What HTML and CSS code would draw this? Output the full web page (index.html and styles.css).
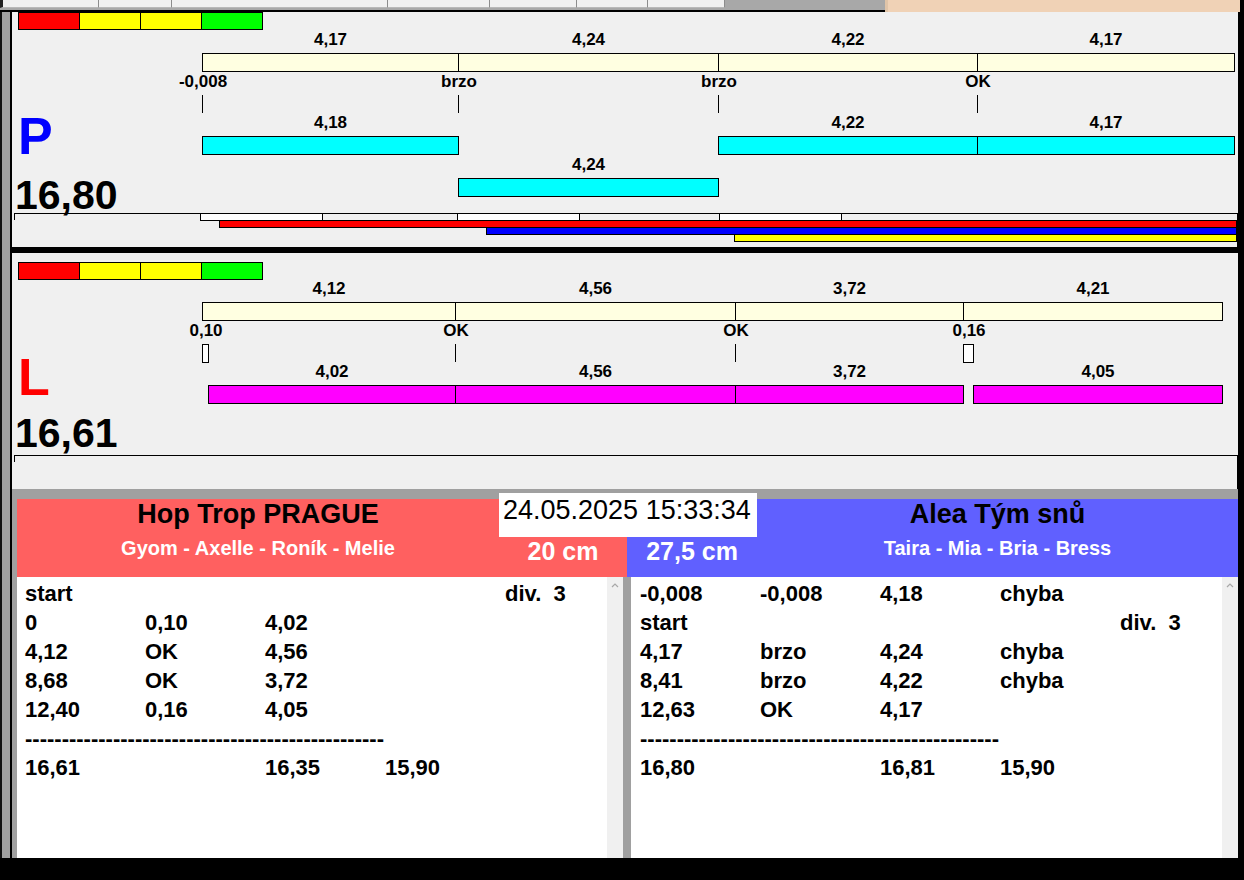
FILE: index.html
```html
<!DOCTYPE html>
<html lang="cs">
<head>
  <meta charset="UTF-8" />
  <meta name="viewport" content="width=device-width, initial-scale=1.0"/>
  <title>Štafeta – měření</title>
  <link rel="stylesheet" href="styles.css">
</head>
<body>
<div class="window">

  <div class="topbar">
    <div class="tabs">
      <div class="tab"></div><div class="tab"></div><div class="tab"></div><div class="tab"></div>
      <div class="tab"></div><div class="tab"></div><div class="tab"></div>
    </div>
    <div class="topbar-fill"></div>
  </div>

  <div class="main">
    <div class="frame-left"></div>
    <div class="content">

      <!-- lane P -->
      <section class="lane lane-p">
        <div class="lane-side">
          <div class="strip"><span class="red"></span><span class="yellow"></span><span class="yellow"></span><span class="green"></span></div>
          <div class="letter blue">P</div>
          <div class="score">16,80</div>
        </div>
        <div class="track">
          <div class="lbl r-plan-l" style="left:190px;width:257px">4,17</div>
          <div class="lbl r-plan-l" style="left:446px;width:261px">4,24</div>
          <div class="lbl r-plan-l" style="left:706px;width:260px">4,22</div>
          <div class="lbl r-plan-l" style="left:965px;width:258px">4,17</div>
          <div class="bar plan r-plan" style="left:190px;width:257px"></div>
          <div class="bar plan r-plan" style="left:446px;width:261px"></div>
          <div class="bar plan r-plan" style="left:706px;width:260px"></div>
          <div class="bar plan r-plan" style="left:965px;width:258px"></div>

          <div class="lbl at r-mark-l" style="left:191px">-0,008</div>
          <div class="lbl at r-mark-l" style="left:447px">brzo</div>
          <div class="lbl at r-mark-l" style="left:707px">brzo</div>
          <div class="lbl at r-mark-l" style="left:966px">OK</div>
          <div class="tick r-tick" style="left:190px"></div>
          <div class="tick r-tick" style="left:446px"></div>
          <div class="tick r-tick" style="left:706px"></div>
          <div class="tick r-tick" style="left:965px"></div>

          <div class="lbl r-act-l" style="left:190px;width:257px">4,18</div>
          <div class="lbl r-act-l" style="left:706px;width:260px">4,22</div>
          <div class="lbl r-act-l" style="left:965px;width:258px">4,17</div>
          <div class="bar cyan r-act" style="left:190px;width:257px"></div>
          <div class="bar cyan r-act" style="left:706px;width:260px"></div>
          <div class="bar cyan r-act" style="left:965px;width:258px"></div>

          <div class="lbl r-act2-l" style="left:446px;width:261px">4,24</div>
          <div class="bar cyan r-act2" style="left:446px;width:261px"></div>
        </div>
        <div class="lane-foot">
          <div class="slot" style="left:186px"></div>
          <div class="slot" style="left:443px"></div>
          <div class="slot" style="left:705px"></div>
          <div class="run run-red" style="left:205px"></div>
          <div class="run run-blue" style="left:472px"></div>
          <div class="run run-yellow" style="left:720px"></div>
        </div>
      </section>

      <div class="lane-sep"></div>

      <!-- lane L -->
      <section class="lane lane-l">
        <div class="lane-side">
          <div class="strip"><span class="red"></span><span class="yellow"></span><span class="yellow"></span><span class="green"></span></div>
          <div class="letter red-text">L</div>
          <div class="score">16,61</div>
        </div>
        <div class="track">
          <div class="lbl r-plan-l" style="left:190px;width:254px">4,12</div>
          <div class="lbl r-plan-l" style="left:443px;width:281px">4,56</div>
          <div class="lbl r-plan-l" style="left:723px;width:229px">3,72</div>
          <div class="lbl r-plan-l" style="left:951px;width:260px">4,21</div>
          <div class="bar plan r-plan" style="left:190px;width:254px"></div>
          <div class="bar plan r-plan" style="left:443px;width:281px"></div>
          <div class="bar plan r-plan" style="left:723px;width:229px"></div>
          <div class="bar plan r-plan" style="left:951px;width:260px"></div>

          <div class="lbl at r-mark-l" style="left:194px">0,10</div>
          <div class="lbl at r-mark-l" style="left:444px">OK</div>
          <div class="lbl at r-mark-l" style="left:724px">OK</div>
          <div class="lbl at r-mark-l" style="left:957px">0,16</div>
          <div class="mark r-tick" style="left:190px;width:7px"></div>
          <div class="tick r-tick" style="left:443px"></div>
          <div class="tick r-tick" style="left:723px"></div>
          <div class="mark r-tick" style="left:951px;width:11px"></div>

          <div class="lbl r-act-l" style="left:196px;width:248px">4,02</div>
          <div class="lbl r-act-l" style="left:443px;width:281px">4,56</div>
          <div class="lbl r-act-l" style="left:723px;width:229px">3,72</div>
          <div class="lbl r-act-l" style="left:961px;width:250px">4,05</div>
          <div class="bar magenta r-act" style="left:196px;width:248px"></div>
          <div class="bar magenta r-act" style="left:443px;width:281px"></div>
          <div class="bar magenta r-act" style="left:723px;width:229px"></div>
          <div class="bar magenta r-act" style="left:961px;width:250px"></div>
        </div>
        <div class="lane-foot"></div>
      </section>

      <!-- teams -->
      <section class="teams">
        <div class="team-heads">
          <div class="team-head home">
            <div class="team-name">Hop Trop PRAGUE</div>
            <div class="team-dogs">Gyom - Axelle - Roník - Melie</div>
            <div class="team-height">20 cm</div>
          </div>
          <div class="team-head away">
            <div class="team-height">27,5 cm</div>
            <div class="team-name">Alea Tým snů</div>
            <div class="team-dogs">Taira - Mia - Bria - Bress</div>
          </div>
        </div>

        <div class="clock">24.05.2025 15:33:34</div>

        <div class="team-lists">
          <div class="list home">
            <div class="list-body">
              <div class="row"><span>start</span><span></span><span></span><span></span><span>div.  3</span></div>
              <div class="row"><span>0</span><span>0,10</span><span>4,02</span></div>
              <div class="row"><span>4,12</span><span>OK</span><span>4,56</span></div>
              <div class="row"><span>8,68</span><span>OK</span><span>3,72</span></div>
              <div class="row"><span>12,40</span><span>0,16</span><span>4,05</span></div>
              <div class="row dashes">-------------------------------------------------</div>
              <div class="row"><span>16,61</span><span></span><span>16,35</span><span>15,90</span></div>
            </div>
            <div class="scroll"><svg width="16" height="10" viewBox="0 0 16 10"><polyline points="5,7 8,4 11,7" fill="none" stroke="#a8a8a8" stroke-width="1.2"/></svg></div>
          </div>
          <div class="list away">
            <div class="list-body">
              <div class="row"><span>-0,008</span><span>-0,008</span><span>4,18</span><span>chyba</span></div>
              <div class="row"><span>start</span><span></span><span></span><span></span><span>div.  3</span></div>
              <div class="row"><span>4,17</span><span>brzo</span><span>4,24</span><span>chyba</span></div>
              <div class="row"><span>8,41</span><span>brzo</span><span>4,22</span><span>chyba</span></div>
              <div class="row"><span>12,63</span><span>OK</span><span>4,17</span></div>
              <div class="row dashes">-------------------------------------------------</div>
              <div class="row"><span>16,80</span><span></span><span>16,81</span><span>15,90</span></div>
            </div>
            <div class="scroll"><svg width="16" height="10" viewBox="0 0 16 10"><polyline points="5,7 8,4 11,7" fill="none" stroke="#a8a8a8" stroke-width="1.2"/></svg></div>
          </div>
        </div>
      </section>

    </div>
    <div class="frame-right"></div>
  </div>

</div>
</body>
</html>
```

FILE: styles.css
```css
* {
  box-sizing: border-box;
}

body {
  margin: 0;
  background: #000;
  font-family: "Liberation Sans", Arial, sans-serif;
  color: #000;
}

.window {
  width: 1244px;
  height: 880px;
  overflow: hidden;
  display: flex;
  flex-direction: column;
}

/* top tab strip (cut off) */
.topbar {
  display: flex;
  height: 12px;
  flex: none;
}

.tabs {
  display: flex;
  width: 885px;
  background: #a8a8a8;
  border-bottom: 2px solid #000;
}

.tab {
  height: 8px;
  background: #f0f0f0;
  border-right: 1px solid #8c8c8c;
  border-bottom: 1px solid #b8b8b8;
}

.tab:nth-child(1) { width: 99px; border-left: 3px solid #222; }
.tab:nth-child(2) { width: 73px; }
.tab:nth-child(3) { width: 216px; }
.tab:nth-child(4) { width: 102px; }
.tab:nth-child(5) { width: 87px; }
.tab:nth-child(6) { width: 71px; }
.tab:nth-child(7) { width: 77px; }

.topbar-fill {
  flex: 1;
  margin-right: 4px;
  background: #f0d2b6;
  border-left: 3px solid #e0c4a8;
}

/* window body */
.main {
  display: flex;
  height: 846px;
  flex: none;
}

.frame-left {
  width: 12px;
  background: #a0a0a0;
  border-left: 2px solid #111;
  border-right: 2px solid #000;
}

.frame-right {
  width: 6px;
  background: #000;
}

.content {
  width: 1226px;
  display: flex;
  flex-direction: column;
}

/* lanes */
.lane {
  position: relative;
  background: #f0f0f0;
  flex: none;
}

.lane-p {
  height: 235px;
}

.lane-l {
  height: 236px;
}

.lane-sep {
  height: 6px;
  background: #000;
  flex: none;
}

.lane-side {
  padding-left: 6px;
}

.lane-l .lane-side {
  padding-top: 9px;
}

.strip {
  display: flex;
  width: 245px;
  height: 18px;
  border: 1px solid #000;
}

.strip span {
  flex: 1;
  border-left: 1px solid #000;
}

.strip span:first-child {
  border-left: 0;
}

.strip .red { background: #ff0000; }
.strip .yellow { background: #ffff00; }
.strip .green { background: #00ff00; }

.letter {
  font-size: 52px;
  line-height: 52px;
  font-weight: bold;
  margin-top: 80px;
}

.lane-l .letter {
  margin-top: 71px;
}

.letter.blue { color: #0000ff; }
.letter.red-text { color: #ff0000; }

.score {
  font-size: 41px;
  line-height: 40px;
  font-weight: bold;
  margin: 13px 0 0 -3px;
}

.lane-l .score {
  margin-top: 10px;
}

/* timeline canvas */
.track {
  position: absolute;
  left: 0;
  top: 0;
  right: 0;
  bottom: 0;
}

.lane-l .track {
  top: 8px;
}

.lbl {
  position: absolute;
  font-size: 17px;
  line-height: 20px;
  font-weight: bold;
  text-align: center;
  white-space: nowrap;
}

.lbl.at {
  transform: translateX(-50%);
}

.bar {
  position: absolute;
  height: 19px;
  border: 1px solid #000;
}

.plan { background: #ffffe1; }
.cyan { background: #00ffff; }
.magenta { background: #ff00ff; }

.tick {
  position: absolute;
  width: 1px;
  height: 18px;
  background: #000;
}

.mark {
  position: absolute;
  height: 19px;
  background: #fff;
  border: 1px solid #000;
}

.r-plan-l { top: 18px; }
.r-plan { top: 41px; }
.r-mark-l { top: 60px; }
.r-tick { top: 83px; }
.r-act-l { top: 101px; }
.r-act { top: 124px; }
.r-act2-l { top: 143px; }
.r-act2 { top: 166px; }

.lane-foot {
  position: absolute;
  left: 2px;
  right: 0;
  bottom: 0;
  height: 34px;
  border-top: 1px solid #000;
  border-right: 1px solid #000;
}

.lane-foot::before {
  content: "";
  position: absolute;
  left: 0;
  top: 0;
  width: 1px;
  height: 6px;
  background: #000;
}

.slot {
  position: absolute;
  top: -1px;
  width: 123px;
  height: 8px;
  background: #fff;
  border: 1px solid #000;
}

.run {
  position: absolute;
  right: 0;
  height: 8px;
  border: 1px solid #000;
}

.run-red { top: 6px; background: #ff0000; }
.run-blue { top: 13px; background: #0000ff; }
.run-yellow { top: 20px; background: #ffff00; }

/* teams */
.teams {
  position: relative;
  flex: 1;
  background: #a0a0a0;
  padding: 10px 0 0 5px;
}

.team-heads {
  display: flex;
  height: 78px;
}

.team-head {
  display: grid;
  grid-template-rows: 36px 42px;
}

.team-head.home {
  width: 610px;
  background: #ff6060;
  grid-template-columns: 482px 128px;
  grid-template-areas: "name ." "dogs height";
}

.team-head.away {
  width: 611px;
  background: #6060ff;
  grid-template-columns: 130px 481px;
  grid-template-areas: ". name" "height dogs";
}

.team-name {
  grid-area: name;
  font-size: 27px;
  line-height: 30px;
  font-weight: bold;
  text-align: center;
}

.team-dogs {
  grid-area: dogs;
  padding-top: 1px;
  font-size: 20px;
  line-height: 24px;
  font-weight: bold;
  color: #fff;
  text-align: center;
}

.team-height {
  grid-area: height;
  padding-top: 2px;
  font-size: 25px;
  line-height: 28px;
  font-weight: bold;
  color: #fff;
  text-align: center;
}

.clock {
  position: absolute;
  left: 487px;
  top: 4px;
  width: 258px;
  height: 44px;
  padding: 2px 0 0 4px;
  background: #fff;
  font-size: 27px;
  line-height: 30px;
}

.team-lists {
  display: flex;
  gap: 8px;
  height: 281px;
}

.list {
  display: flex;
  background: #fff;
  flex: none;
}

.list.home { width: 606px; }
.list.away { width: 607px; }

.list-body {
  flex: 1;
  min-width: 0;
  overflow: hidden;
  padding: 2px 0 0 8px;
}

.list.away .list-body {
  padding-left: 9px;
}

.scroll {
  flex: none;
  width: 16px;
  padding-top: 3px;
  background: #f0f0f0;
}

.scroll svg {
  display: block;
}

.row {
  display: grid;
  grid-template-columns: repeat(5, 120px);
  height: 29px;
  font-size: 22px;
  line-height: 29px;
  font-weight: bold;
  white-space: pre;
}

.row.dashes {
  display: block;
  overflow: hidden;
}
```
